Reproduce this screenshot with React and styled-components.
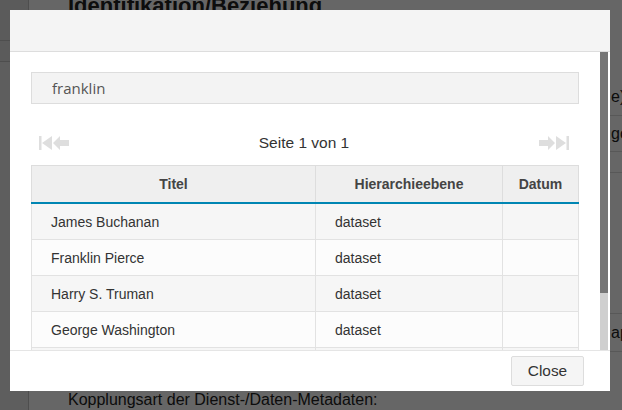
import React from 'react';
import styled, { createGlobalStyle } from 'styled-components';

const rows = [
  { title: 'James Buchanan', level: 'dataset', date: '' },
  { title: 'Franklin Pierce', level: 'dataset', date: '' },
  { title: 'Harry S. Truman', level: 'dataset', date: '' },
  { title: 'George Washington', level: 'dataset', date: '' },
  { title: 'Franklin D. Roosevelt', level: 'dataset', date: '' },
];

const StepIcon = ({ flip }) => (
  <svg width="13" height="14" viewBox="0 0 13 14" style={flip ? { transform: 'scaleX(-1)' } : undefined}>
    <rect x="0" y="0" width="2.5" height="14" fill="currentColor" />
    <polygon points="3,7 13,0 13,14" fill="currentColor" />
  </svg>
);

const ArrowIcon = ({ flip }) => (
  <svg width="16" height="14" viewBox="0 0 16 14" style={flip ? { transform: 'scaleX(-1)' } : undefined}>
    <polygon points="0,7 7,0 7,4 16,4 16,10 7,10 7,14" fill="currentColor" />
  </svg>
);

const App = () => {
  return (
    <>
      <GlobalStyle />
      <Page>
        <Sidebar>
          <SideBlock $h={40} />
          <SideBlock $h={20} />
        </Sidebar>
        <Main>
          <PageTitle>Identifikation/Beziehung</PageTitle>
          <Form>
            <FormRow $h={36}>
              <span />
              <span>e):</span>
            </FormRow>
            <FormRow $h={35}>
              <span />
              <span>go</span>
            </FormRow>
            <FormRow $h={20} />
            <FormRow $h={140} />
            <FormRow $h={37}>
              <span />
              <span>ap</span>
            </FormRow>
          </Form>
          <SectionLabel>Kopplungsart der Dienst-/Daten-Metadaten:</SectionLabel>
        </Main>
      </Page>

      <Backdrop />

      <Modal>
        <ModalHeader />
        <ModalBody>
          <Scroller>
            <SearchInput value="franklin" readOnly />
            <Pager>
              <PagerNav $side="left">
                <StepIcon />
                <ArrowIcon />
              </PagerNav>
              <PagerText>Seite 1 von 1</PagerText>
              <PagerNav $side="right">
                <ArrowIcon flip />
                <StepIcon flip />
              </PagerNav>
            </Pager>
            <Table>
              <colgroup>
                <col style={{ width: 284 }} />
                <col style={{ width: 187 }} />
                <col />
              </colgroup>
              <thead>
                <tr>
                  <Th>Titel</Th>
                  <Th>Hierarchieebene</Th>
                  <Th>Datum</Th>
                </tr>
              </thead>
              <tbody>
                {rows.map((r, i) => (
                  <Tr key={r.title} $odd={i % 2 === 0}>
                    <Td>{r.title}</Td>
                    <Td>{r.level}</Td>
                    <Td>{r.date}</Td>
                  </Tr>
                ))}
              </tbody>
            </Table>
          </Scroller>
          <ScrollTrack>
            <ScrollThumb />
          </ScrollTrack>
        </ModalBody>
        <ModalFooter>
          <Button>Close</Button>
        </ModalFooter>
      </Modal>
    </>
  );
};

const GlobalStyle = createGlobalStyle`
  html, body {
    margin: 0;
    height: 100%;
    overflow: hidden;
  }
  body {
    font-family: "Liberation Sans", Arial, sans-serif;
    color: #333;
    background: #fff;
  }
`;

const Page = styled.div`
  display: flex;
  height: 100vh;
`;

const Sidebar = styled.aside`
  width: 28px;
  flex: none;
  background: #ececec;
  border-right: 1px solid #c4c4c4;
`;

const SideBlock = styled.div`
  height: ${({ $h }) => $h}px;
  border-bottom: 1px solid #c4c4c4;
  background: #e4e4e4;
`;

const Main = styled.main`
  flex: 1;
  padding-left: 39px;
  overflow: hidden;
  white-space: nowrap;
`;

const PageTitle = styled.h1`
  margin: -7px 0 0;
  font-size: 22px;
  line-height: 26px;
  font-weight: 700;
  color: #222;
`;

const Form = styled.div`
  margin-top: 60px;
`;

const FormRow = styled.div`
  display: grid;
  grid-template-columns: 543px auto;
  align-items: center;
  height: ${({ $h }) => $h}px;
  border-bottom: 1px solid #ddd;
  font-size: 16px;
  color: #222;
`;

const SectionLabel = styled.div`
  margin-top: 38px;
  font-size: 16px;
  line-height: 20px;
  color: #222;
`;

const Backdrop = styled.div`
  position: fixed;
  inset: 0;
  background: rgba(0, 0, 0, 0.6);
`;

const Modal = styled.div`
  position: fixed;
  top: 10px;
  left: 10px;
  width: 600px;
  height: 381px;
  background: #fff;
  display: flex;
  flex-direction: column;
`;

const ModalHeader = styled.div`
  height: 41px;
  flex: none;
  background: #f4f4f4;
  border-bottom: 1px solid #ddd;
`;

const ModalBody = styled.div`
  flex: 1;
  min-height: 0;
  display: flex;
  margin-right: 2px;
`;

const Scroller = styled.div`
  flex: 1;
  min-width: 0;
  overflow: hidden;
  padding: 20px 21px 36px;
`;

const ScrollTrack = styled.div`
  width: 8px;
  flex: none;
  background: #cfcfcf;
`;

const ScrollThumb = styled.div`
  height: 241px;
  background: #767676;
`;

const SearchInput = styled.input`
  display: block;
  box-sizing: border-box;
  width: 100%;
  height: 32px;
  margin: 0;
  padding: 0 20px;
  border: 1px solid #ddd;
  background: #f3f3f3;
  font-family: "Open Sans", sans-serif;
  font-size: 15px;
  color: #555;
  outline: none;
`;

const Pager = styled.div`
  display: flex;
  align-items: center;
  justify-content: space-between;
  height: 22px;
  margin: 28px 0 11px;
`;

const PagerNav = styled.div`
  display: flex;
  align-items: center;
  gap: 1px;
  width: 60px;
  justify-content: ${({ $side }) => ($side === 'left' ? 'flex-start' : 'flex-end')};
  padding: ${({ $side }) => ($side === 'left' ? '0 0 0 8px' : '0 10px 0 0')};
  color: #dedede;
`;

const PagerText = styled.span`
  font-size: 15.5px;
  color: #333;
`;

const Table = styled.table`
  width: 100%;
  border-collapse: collapse;
  table-layout: fixed;
  border: 1px solid #ddd;
  font-size: 14px;
`;

const Th = styled.th`
  height: 36px;
  padding: 0;
  background: #efefef;
  border-right: 1px solid #ddd;
  border-bottom: 2px solid #0086b3;
  font-weight: 700;
  color: #444;
  text-align: center;
`;

const Tr = styled.tr`
  background: ${({ $odd }) => ($odd ? '#f6f6f6' : '#fcfcfc')};
`;

const Td = styled.td`
  height: 35px;
  padding: 0 19px;
  border: 1px solid #e2e2e2;
  color: #333;
  white-space: nowrap;
  overflow: hidden;
`;

const ModalFooter = styled.div`
  flex: none;
  height: 40px;
  display: flex;
  align-items: center;
  justify-content: flex-end;
  padding-right: 26px;
  border-top: 1px solid #e5e5e5;
`;

const Button = styled.button`
  width: 73px;
  height: 30px;
  background: #f5f5f5;
  border: 1px solid #ddd;
  border-radius: 2px;
  font-family: "Liberation Sans", Arial, sans-serif;
  font-size: 15.4px;
  color: #333;
`;

export default App;
